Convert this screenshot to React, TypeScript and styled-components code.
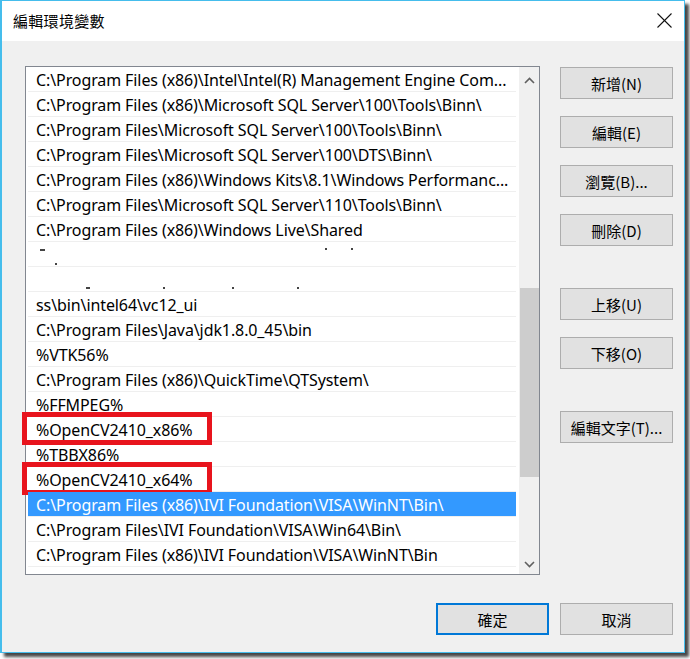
import React from "react";
import styled, { createGlobalStyle } from "styled-components";

const Global = createGlobalStyle`
  html, body { margin: 0; padding: 0; background: #ffffff; }
  body { font-family: "Noto Sans", "Noto Sans CJK TC", sans-serif; }
`;

const UI_FONT = `"Noto Sans", "Noto Sans CJK TC", sans-serif`;
const CJK_FONT = `"Noto Sans CJK TC", "Noto Sans", sans-serif`;

const Page = styled.div`
  width: 690px;
  height: 659px;
  overflow: hidden;
`;

const Window = styled.div`
  box-sizing: border-box;
  width: 685px;
  height: 653px;
  border: 1px solid #45bdec;
  border-left-width: 2px;
  box-shadow: 4px 4px 3px rgba(0, 0, 0, 0.72);
  display: flex;
  flex-direction: column;
  background: #f0f0f0;
`;

const TitleBar = styled.div`
  height: 40px;
  background: #ffffff;
  display: flex;
  align-items: center;
  justify-content: space-between;
  padding: 0 12px 0 11px;
`;

const Title = styled.div`
  font-family: ${CJK_FONT};
  font-size: 15px;
  color: #000;
  letter-spacing: 0.3px;
  margin-top: -1px;
`;

const CloseBtn = styled.div`
  width: 16px;
  height: 16px;
  display: flex;
  align-items: center;
  justify-content: center;
  margin-top: -1px;
`;

const Body = styled.div`
  flex: 1;
  display: flex;
  flex-direction: column;
  padding: 25px 11px 0 23px;
`;

const Main = styled.div`
  display: flex;
  gap: 20px;
`;

const ListBox = styled.div`
  box-sizing: border-box;
  width: 515px;
  height: 509px;
  border: 1px solid #828790;
  background: #ffffff;
  display: flex;
`;

const Rows = styled.div`
  flex: 1;
  min-width: 0;
  padding: 0 3px 0 2px;
  overflow-x: visible;
  overflow-y: clip;
`;

const Row = styled.div<{ $selected?: boolean; $marked?: boolean }>`
  position: relative;
  box-sizing: border-box;
  height: 25px;
  border-bottom: 1px solid #efefef;
  background: ${(p) => (p.$selected ? "#3399ff" : "transparent")};
  color: ${(p) => (p.$selected ? "#ffffff" : "#000000")};
  font-family: ${UI_FONT};
  font-size: 16px;
  letter-spacing: -0.1px;
  line-height: 24px;
  padding: 1px 0 0 8px;
  white-space: nowrap;
  overflow: visible;

  ${(p) =>
    p.$marked &&
    `
    &::after {
      content: "";
      position: absolute;
      left: -6px;
      top: -5px;
      width: 190px;
      bottom: -4px;
      box-sizing: border-box;
      border: 5px solid #e8141d;
      pointer-events: none;
    }
  `}
`;

const RowText = styled.span`
  display: block;
  overflow: hidden;
  white-space: nowrap;
`;

const GarbledRow = styled.div`
  box-sizing: border-box;
  height: 25px;
  border-bottom: 1px solid #efefef;
  display: flex;
  align-items: flex-start;
`;

const Mark = styled.span<{ $x: number; $y: number; $w: number }>`
  display: block;
  flex: none;
  margin-left: ${(p) => p.$x}px;
  margin-top: ${(p) => p.$y}px;
  width: ${(p) => p.$w}px;
  height: 1.5px;
  background: #444;
`;

const Scrollbar = styled.div`
  width: 20px;
  background: #f0f0f0;
  display: flex;
  flex-direction: column;
`;

const ArrowBox = styled.div<{ $h: number }>`
  height: ${(p) => p.$h}px;
  display: flex;
  align-items: center;
  justify-content: center;
`;

const Track = styled.div`
  flex: 1;
  display: flex;
  flex-direction: column;
  align-items: center;
`;

const Spacer = styled.div<{ $h: number }>`
  height: ${(p) => p.$h}px;
  flex: none;
`;

const Thumb = styled.div<{ $h: number }>`
  width: 19px;
  height: ${(p) => p.$h}px;
  background: #cdcdcd;
  flex: none;
`;

const ButtonColumn = styled.div`
  display: flex;
  flex-direction: column;
  margin-top: 1px;
`;

const Button = styled.div<{ $gap?: number; $default?: boolean }>`
  box-sizing: border-box;
  width: 113px;
  height: 32px;
  margin-top: ${(p) => p.$gap ?? 0}px;
  background: #e1e1e1;
  border: ${(p) => (p.$default ? "2px solid #0078d7" : "1px solid #adadad")};
  display: flex;
  align-items: center;
  justify-content: center;
  font-family: ${CJK_FONT};
  font-size: 15px;
  color: #000;
  white-space: nowrap;
`;

const Footer = styled.div`
  display: flex;
  justify-content: flex-end;
  gap: 11px;
  margin-top: 28px;
`;

type Item =
  | { kind: "text"; text: string; selected?: boolean; marked?: boolean }
  | { kind: "garbled"; marks: { x: number; y: number; w: number }[] };

const items: Item[] = [
  { kind: "text", text: "C:\\Program Files (x86)\\Intel\\Intel(R) Management Engine Com..." },
  { kind: "text", text: "C:\\Program Files (x86)\\Microsoft SQL Server\\100\\Tools\\Binn\\" },
  { kind: "text", text: "C:\\Program Files\\Microsoft SQL Server\\100\\Tools\\Binn\\" },
  { kind: "text", text: "C:\\Program Files\\Microsoft SQL Server\\100\\DTS\\Binn\\" },
  { kind: "text", text: "C:\\Program Files (x86)\\Windows Kits\\8.1\\Windows Performanc..." },
  { kind: "text", text: "C:\\Program Files\\Microsoft SQL Server\\110\\Tools\\Binn\\" },
  { kind: "text", text: "C:\\Program Files (x86)\\Windows Live\\Shared" },
  {
    kind: "garbled",
    marks: [
      { x: 12, y: 7, w: 5 },
      { x: 10, y: 21, w: 2 },
      { x: 268, y: 6, w: 2 },
      { x: 24, y: 6, w: 2 },
    ],
  },
  {
    kind: "garbled",
    marks: [
      { x: 58, y: 20, w: 4 },
      { x: 73, y: 20, w: 2 },
      { x: 67, y: 20, w: 2 },
      { x: 63, y: 20, w: 2 },
    ],
  },
  { kind: "text", text: "ss\\bin\\intel64\\vc12_ui" },
  { kind: "text", text: "C:\\Program Files\\Java\\jdk1.8.0_45\\bin" },
  { kind: "text", text: "%VTK56%" },
  { kind: "text", text: "C:\\Program Files (x86)\\QuickTime\\QTSystem\\" },
  { kind: "text", text: "%FFMPEG%" },
  { kind: "text", text: "%OpenCV2410_x86%", marked: true },
  { kind: "text", text: "%TBBX86%" },
  { kind: "text", text: "%OpenCV2410_x64%", marked: true },
  { kind: "text", text: "C:\\Program Files (x86)\\IVI Foundation\\VISA\\WinNT\\Bin\\", selected: true },
  { kind: "text", text: "C:\\Program Files\\IVI Foundation\\VISA\\Win64\\Bin\\" },
  { kind: "text", text: "C:\\Program Files (x86)\\IVI Foundation\\VISA\\WinNT\\Bin" },
  { kind: "text", text: "C:\\Program Files (x86)\\Microsoft SQL Server\\120\\DTS\\Binn\\" },
];

const Chevron = ({ up }: { up?: boolean }) => (
  <svg width="11" height="7" viewBox="0 0 11 7">
    <polyline
      points={up ? "1,6 5.5,1.5 10,6" : "1,1 5.5,5.5 10,1"}
      fill="none"
      stroke="#606060"
      strokeWidth="1.6"
    />
  </svg>
);

export default function App() {
  return (
    <Page>
      <Global />
      <Window>
        <TitleBar>
          <Title>編輯環境變數</Title>
          <CloseBtn>
            <svg width="15" height="15" viewBox="0 0 15 15">
              <line x1="0.5" y1="0.5" x2="14.5" y2="14.5" stroke="#111" strokeWidth="1.1" />
              <line x1="14.5" y1="0.5" x2="0.5" y2="14.5" stroke="#111" strokeWidth="1.1" />
            </svg>
          </CloseBtn>
        </TitleBar>
        <Body>
          <Main>
            <ListBox>
              <Rows>
                {items.map((it, i) =>
                  it.kind === "text" ? (
                    <Row key={i} $selected={it.selected} $marked={it.marked}>
                      <RowText>{it.text}</RowText>
                    </Row>
                  ) : (
                    <GarbledRow key={i}>
                      {it.marks.map((m, j) => (
                        <Mark key={j} $x={m.x} $y={m.y} $w={m.w} />
                      ))}
                    </GarbledRow>
                  )
                )}
              </Rows>
              <Scrollbar>
                <ArrowBox $h={26}>
                  <Chevron up />
                </ArrowBox>
                <Track>
                  <Spacer $h={195} />
                  <Thumb $h={189} />
                </Track>
                <ArrowBox $h={20}>
                  <Chevron />
                </ArrowBox>
              </Scrollbar>
            </ListBox>
            <ButtonColumn>
              <Button>新增(N)</Button>
              <Button $gap={17}>編輯(E)</Button>
              <Button $gap={17}>瀏覽(B)...</Button>
              <Button $gap={17}>刪除(D)</Button>
              <Button $gap={42}>上移(U)</Button>
              <Button $gap={17}>下移(O)</Button>
              <Button $gap={42}>編輯文字(T)...</Button>
            </ButtonColumn>
          </Main>
          <Footer>
            <Button $default>確定</Button>
            <Button>取消</Button>
          </Footer>
        </Body>
      </Window>
    </Page>
  );
}
